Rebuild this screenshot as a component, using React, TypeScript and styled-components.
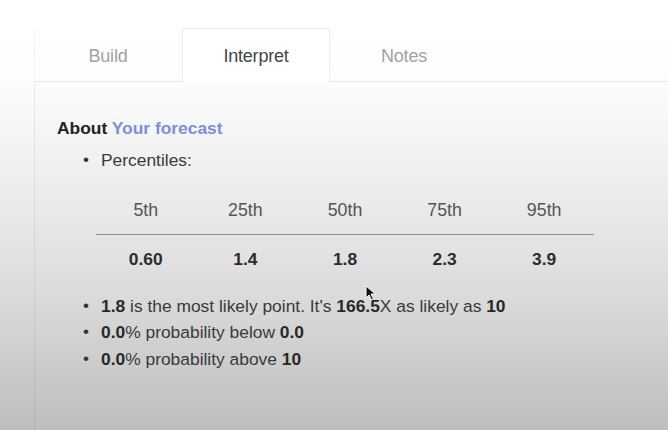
import React from "react";
import styled, { createGlobalStyle } from "styled-components";

const GlobalStyle = createGlobalStyle`
  html, body {
    margin: 0;
    padding: 0;
  }
  body {
    width: 668px;
    height: 430px;
    overflow: hidden;
    font-family: "Liberation Sans", Arial, Helvetica, sans-serif;
    background: linear-gradient(
      to bottom,
      #ffffff 0px,
      #fefefe 70px,
      #f4f4f4 140px,
      #e8e8e8 220px,
      #dadada 300px,
      #cbcbcb 370px,
      #bebebe 430px
    );
  }
`;

const Page = styled.div`
  position: relative;
  width: 668px;
  height: 430px;
  padding: 28px 0 0 34px;
  box-sizing: border-box;
`;

const TabBar = styled.div`
  display: flex;
  height: 54px;
  border-bottom: 1px solid rgba(0, 0, 0, 0.08);
  box-sizing: border-box;
`;

const Tab = styled.div<{ $active?: boolean; $first?: boolean }>`
  width: 148px;
  box-sizing: border-box;
  display: flex;
  align-items: center;
  justify-content: center;
  font-size: 18px;
  letter-spacing: -0.2px;
  color: ${(p) => (p.$active ? "#454545" : "#a2a2a2")};
  background: ${(p) => (p.$active ? "#ffffff" : "transparent")};
  border: 1px solid ${(p) => (p.$active ? "rgba(0,0,0,0.07)" : "transparent")};
  border-bottom: none;
  border-left-color: ${(p) =>
    p.$active ? "rgba(0,0,0,0.07)" : p.$first ? "rgba(0,0,0,0.035)" : "transparent"};
  margin-bottom: ${(p) => (p.$active ? "-1px" : "0")};
  height: ${(p) => (p.$active ? "54px" : "53px")};
  padding-top: 2px;
`;

const PanelBody = styled.div`
  border-left: 1px solid rgba(0, 0, 0, 0.07);
  height: 360px;
  padding: 36px 0 0 22px;
  box-sizing: border-box;
  color: #3a3a3a;
  font-size: 17.4px;
`;

const Heading = styled.div`
  font-weight: bold;
  line-height: 20px;
  color: #222;
`;

const Accent = styled.span`
  color: #7d8fd9;
`;

const List = styled.ul<{ $gap: number }>`
  list-style: none;
  margin: ${(p) => p.$gap}px 0 0 0;
  padding: 0 0 0 26px;
`;

const Item = styled.li`
  display: flex;
  line-height: 26.5px;
`;

const Bullet = styled.span`
  width: 18px;
  flex: none;
  font-size: 17px;
  color: #333;
`;

const B = styled.b`
  color: #282828;
`;

const Table = styled.div`
  display: grid;
  grid-template-columns: repeat(5, 99.6px);
  margin: 26px 0 0 39px;
`;

const HeadCell = styled.div`
  text-align: center;
  font-size: 17.8px;
  line-height: 20px;
  color: #555;
  padding-bottom: 14px;
  border-bottom: 1.5px solid #8c8c8c;
`;

const ValueCell = styled.div`
  text-align: center;
  font-weight: bold;
  line-height: 20px;
  color: #2c2c2c;
  padding-top: 14px;
`;

const Cursor = styled.svg`
  position: absolute;
  left: 365px;
  top: 285px;
`;

const percentiles = [
  { label: "5th", value: "0.60" },
  { label: "25th", value: "1.4" },
  { label: "50th", value: "1.8" },
  { label: "75th", value: "2.3" },
  { label: "95th", value: "3.9" },
];

export default function App() {
  return (
    <Page>
      <GlobalStyle />
      <TabBar>
        <Tab $first>Build</Tab>
        <Tab $active>Interpret</Tab>
        <Tab>Notes</Tab>
      </TabBar>
      <PanelBody>
        <Heading>
          About <Accent>Your forecast</Accent>
        </Heading>
        <List $gap={9}>
          <Item>
            <Bullet>•</Bullet>
            <span>Percentiles:</span>
          </Item>
        </List>
        <Table>
          {percentiles.map((p) => (
            <HeadCell key={p.label}>{p.label}</HeadCell>
          ))}
          {percentiles.map((p) => (
            <ValueCell key={p.label}>{p.value}</ValueCell>
          ))}
        </Table>
        <List $gap={24}>
          <Item>
            <Bullet>•</Bullet>
            <span>
              <B>1.8</B> is the most likely point. It's <B>166.5</B>X as likely as <B>10</B>
            </span>
          </Item>
          <Item>
            <Bullet>•</Bullet>
            <span>
              <B>0.0</B>% probability below <B>0.0</B>
            </span>
          </Item>
          <Item>
            <Bullet>•</Bullet>
            <span>
              <B>0.0</B>% probability above <B>10</B>
            </span>
          </Item>
        </List>
      </PanelBody>
      <Cursor width="12" height="16" viewBox="0 0 12 16">
        <path d="M1 1 L1 13 L4 10 L6.5 15 L8.5 14 L6 9 L10.5 9 Z" fill="#111" stroke="#fff" strokeWidth="1" />
      </Cursor>
    </Page>
  );
}
